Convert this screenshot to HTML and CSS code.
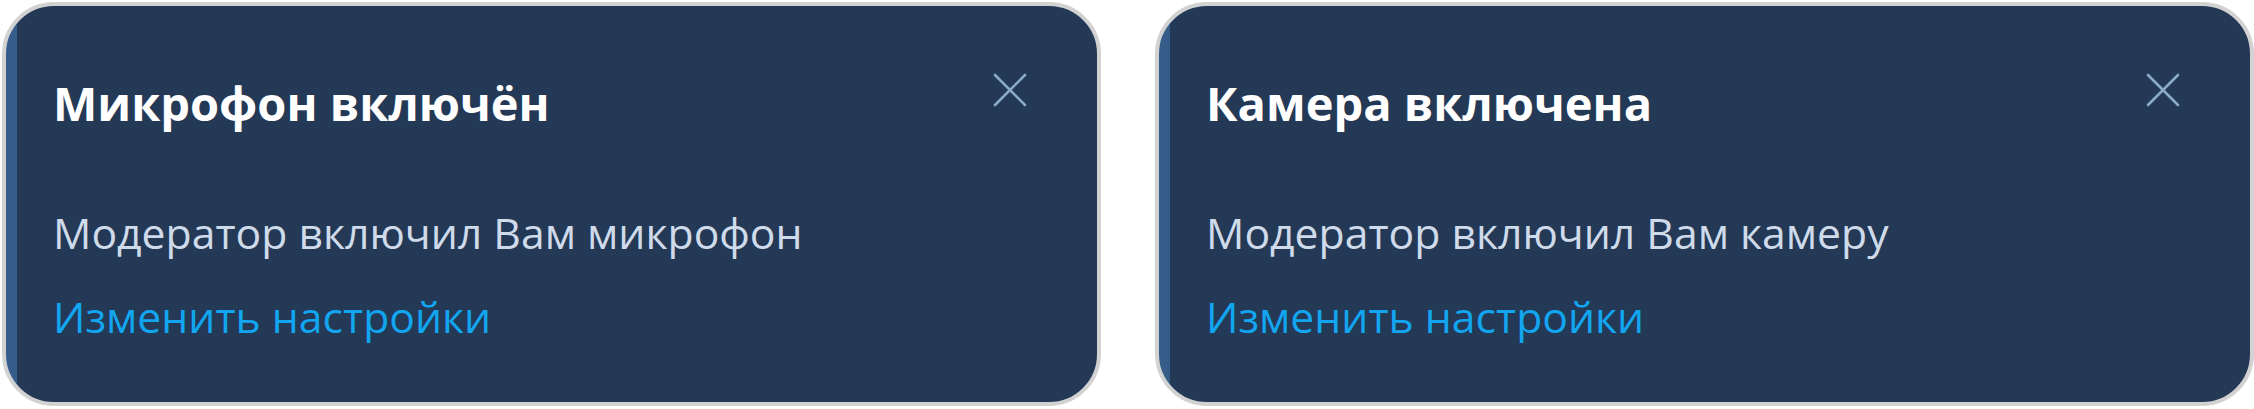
FILE: index.html
```html
<!DOCTYPE html>
<html lang="ru">
<head>
<meta charset="utf-8">
<title>Уведомления</title>
<link rel="stylesheet" href="styles.css">
</head>
<body>
<div class="toasts">
  <section class="toast">
    <header class="toast-head">
      <h2 class="toast-title">Микрофон включён</h2>
      <button class="toast-close" type="button" aria-label="Закрыть">
        <svg viewBox="0 0 34 34" width="34" height="34"><path d="M2 2 L32 32 M32 2 L2 32"/></svg>
      </button>
    </header>
    <p class="toast-text">Модератор включил Вам микрофон</p>
    <a class="toast-link" href="#">Изменить настройки</a>
  </section>
  <section class="toast">
    <header class="toast-head">
      <h2 class="toast-title">Камера включена</h2>
      <button class="toast-close" type="button" aria-label="Закрыть">
        <svg viewBox="0 0 34 34" width="34" height="34"><path d="M2 2 L32 32 M32 2 L2 32"/></svg>
      </button>
    </header>
    <p class="toast-text">Модератор включил Вам камеру</p>
    <a class="toast-link" href="#">Изменить настройки</a>
  </section>
</div>
</body>
</html>
```
FILE: styles.css
```css
html, body {
  margin: 0;
  padding: 0;
  background: #ffffff;
}

body {
  font-family: "Open Sans", "Noto Sans", sans-serif;
}

.toasts {
  display: flex;
  gap: 54px;
  padding: 2px 0 0 2px;
}

/* notification card: grey frame, accent stripe along the left edge */
.toast {
  box-sizing: border-box;
  width: 1099px;
  height: 404px;
  border: 4px solid #d2d2d2;
  border-radius: 52px;
  background: linear-gradient(to right, #365c8a 11px, #243956 11px);
  padding: 65px 70px 0 47px;
  display: flex;
  flex-direction: column;
  align-items: flex-start;
}

.toast-head {
  display: flex;
  align-items: flex-start;
  justify-content: space-between;
  align-self: stretch;
}

.toast-title {
  margin: 0;
  font-size: 47px;
  line-height: 64px;
  font-weight: 700;
  color: #ffffff;
}

.toast-close {
  margin: 2px 0 0 0;
  padding: 0;
  border: 0;
  background: none;
  width: 34px;
  height: 34px;
  cursor: pointer;
}

.toast-close svg {
  display: block;
  fill: none;
  stroke: #8aabc8;
  stroke-width: 2.6;
  stroke-linecap: round;
}

.toast-text {
  margin: 66px 0 0 0;
  font-size: 42.7px;
  line-height: 63px;
  color: #cfdbea;
}

.toast-link {
  margin-top: 21px;
  font-size: 42.7px;
  line-height: 63px;
  color: #12a5f0;
  text-decoration: none;
}
```
